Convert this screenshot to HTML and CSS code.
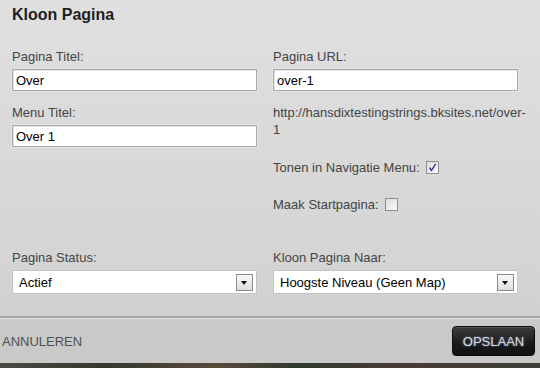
FILE: index.html
```html
<!DOCTYPE html>
<html lang="nl">
<head>
    <meta charset="UTF-8">
    <meta name="viewport" content="width=device-width, initial-scale=1.0">
    <title>Kloon Pagina</title>
    <link rel="stylesheet" href="styles.css">
</head>
<body>

<div class="dialog">
    <h1 class="dialog-title">Kloon Pagina</h1>

    <div class="form">
        <!-- left column -->
        <div class="col">
            <label class="label" for="pageTitle">Pagina Titel:</label>
            <input type="text" id="pageTitle" class="input" value="Over">

            <label class="label label-next" for="menuTitle">Menu Titel:</label>
            <input type="text" id="menuTitle" class="input" value="Over 1">
        </div>

        <!-- right column -->
        <div class="col col-right">
            <label class="label" for="pageUrl">Pagina URL:</label>
            <input type="text" id="pageUrl" class="input" value="over-1">

            <div class="url-preview">http://hansdixtestingstrings.bksites.net/over-<wbr>1</div>

            <div class="check-row">
                <span>Tonen in Navigatie Menu:</span>
                <span class="checkbox checked">
                    <svg width="9" height="9" viewBox="0 0 9 9"><path d="M1.5 4.5 L3.5 7.5 L7.8 0.8" fill="none" stroke="#2b3f93" stroke-width="1.4"/></svg>
                </span>
            </div>
            <div class="check-row check-row-next">
                <span>Maak Startpagina:</span>
                <span class="checkbox"></span>
            </div>
        </div>

        <div class="col">
            <div class="label">Pagina Status:</div>
            <div class="select">
                <span>Actief</span>
                <span class="select-arrow"></span>
            </div>
        </div>

        <div class="col col-right">
            <div class="label">Kloon Pagina Naar:</div>
            <div class="select">
                <span>Hoogste Niveau (Geen Map)</span>
                <span class="select-arrow"></span>
            </div>
        </div>
    </div>

    <div class="footer">
        <a class="cancel">ANNULEREN</a>
        <button class="save">OPSLAAN</button>
    </div>
</div>
<div class="backdrop"></div>

</body>
</html>
```

FILE: styles.css
```css
body {
    margin: 0;
    padding: 0;
    font-family: "Liberation Sans", Arial, sans-serif;
    font-size: 13px;
    color: #444;
    background: #c8c8c8;
    overflow: hidden;
}
.dialog {
    height: 363px;
    background: linear-gradient(#e0e0e0, #d3d3d3 80%, #c9c9c9);
    display: flex;
    flex-direction: column;
}
.dialog-title {
    margin: 0;
    padding: 6px 12px 0;
    font-size: 16px;
    line-height: 18px;
    font-weight: bold;
    color: #1e1e1e;
}
.form {
    display: grid;
    grid-template-columns: 245px 259px;
    column-gap: 16px;
    row-gap: 38px;
    padding: 25px 12px 0;
}
.col {
    display: flex;
    flex-direction: column;
    align-items: flex-start;
}
.label {
    display: block;
    line-height: 15px;
    margin-bottom: 5px;
    color: #454545;
}
.label-next {
    margin-top: 14px;
}
.input {
    box-sizing: border-box;
    width: 245px;
    height: 22px;
    margin: 0;
    padding: 0 3px;
    border: 1px solid #a9a9a9;
    box-shadow: 0 0 0 1px #e6e6e6, inset 1px 1px 0 #e4e4e4;
    background: #fff;
    font-family: inherit;
    font-size: 13px;
    color: #000;
}
.url-preview {
    margin-top: 13px;
    line-height: 17px;
    color: #444;
}
.check-row {
    display: flex;
    align-items: center;
    gap: 6px;
    margin-top: 22px;
    line-height: 15px;
}
.checkbox {
    box-sizing: border-box;
    width: 13px;
    height: 13px;
    border: 1px solid #8f8f8f;
    background: linear-gradient(135deg, #dcdcdc, #fbfbfb);
    display: flex;
    align-items: center;
    justify-content: center;
}
.select {
    box-sizing: border-box;
    width: 245px;
    height: 24px;
    display: flex;
    align-items: center;
    justify-content: space-between;
    padding: 0 3px 0 6px;
    border: 1px solid #c4c4c4;
    background: #fff;
    color: #000;
}
.select-arrow {
    box-sizing: border-box;
    width: 17px;
    height: 17px;
    border: 1px solid #8a8a8a;
    background: linear-gradient(#fafafa, #dedede);
    position: relative;
}
.select-arrow::after {
    content: "";
    position: absolute;
    left: 4px;
    top: 6px;
    border-left: 3.5px solid transparent;
    border-right: 3.5px solid transparent;
    border-top: 4px solid #111;
}
.footer {
    margin-top: 22px;
    border-top: 2px solid #a6a6a6;
    box-shadow: inset 0 1px 0 #e2e2e2;
    display: flex;
    justify-content: space-between;
    align-items: flex-start;
    padding: 0 5px 0 2px;
    flex: 1;
    background: #c9c9c9;
}
.cancel {
    margin-top: 16px;
    line-height: 15px;
    color: #505050;
    cursor: pointer;
}
.save {
    margin-top: 8px;
    width: 83px;
    height: 30px;
    padding: 0;
    border: 1px solid #0c0c0c;
    border-radius: 4px;
    background: linear-gradient(#3d3d3d, #1a1a1a 60%, #111);
    box-shadow: inset 0 1px 0 #555;
    color: #d6d6d6;
    font-family: inherit;
    font-size: 13px;
    text-shadow: 0 0 2px #7f95c8;
    cursor: pointer;
}
.backdrop {
    height: 5px;
    background: linear-gradient(90deg, #4a4a44, #35382f 20%, #5a4a3a 40%, #2f3a2d 55%, #4c3b35 75%, #3c3f39);
}
```
